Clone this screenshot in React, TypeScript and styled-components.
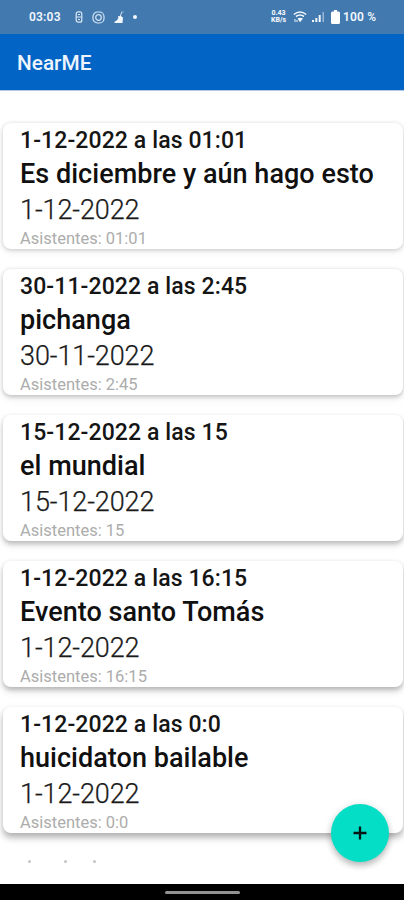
import React from 'react';
import styled, { createGlobalStyle } from 'styled-components';

const GlobalStyle = createGlobalStyle`
  * { box-sizing: border-box; }
  body { margin: 0; background: #fff; font-family: Roboto, 'Liberation Sans', sans-serif; }
`;

const Screen = styled.div`
  position: relative;
  width: 404px;
  height: 900px;
  display: flex;
  flex-direction: column;
  overflow: hidden;
  background: #fff;
`;

const StatusBar = styled.header`
  flex: 0 0 33.5px;
  display: flex;
  align-items: center;
  justify-content: space-between;
  padding: 1px 27px 0 29px;
  background: #4279af;
  color: #f1f7fd;
  font-size: 12px;
  font-weight: 600;
`;

const StatusGroup = styled.div<{ $gap: number }>`
  display: flex;
  align-items: center;
  gap: ${(p) => p.$gap}px;
  white-space: nowrap;
`;

const Clock = styled.span`
  width: 33px;
  margin-right: 4px;
  letter-spacing: 0.2px;
`;

const Speed = styled.span`
  display: flex;
  flex-direction: column;
  width: 15px;
  margin-right: 1px;
  font-size: 7px;
  line-height: 7px;
  font-weight: 800;
  text-align: center;
`;

const Percent = styled.span`
  width: 34px;
  margin-left: -2px;
  letter-spacing: 0.2px;
`;

const AppBar = styled.div`
  flex: 0 0 56.5px;
  display: flex;
  align-items: center;
  padding: 3px 17px 0;
  background: #0265c6;
  box-shadow: 0 1px 0 #b4c8e6;
`;

const AppTitle = styled.h1`
  margin: 0;
  color: #eef5fd;
  font-size: 20.8px;
  line-height: 24px;
  font-weight: 500;
`;

const EventList = styled.main`
  flex: 1;
  min-height: 0;
  overflow: hidden;
  display: flex;
  flex-direction: column;
  gap: 20.1px;
  padding: 33px 1px 0 3px;
`;

const Card = styled.article<{ $depth: number }>`
  flex: 0 0 126px;
  height: 126px;
  min-height: 0;
  padding: 5px 17px 0;
  border-radius: 8px;
  background: #fff;
  white-space: nowrap;
  box-shadow:
    0 ${(p) => 1 + p.$depth * 0.6}px ${(p) => 4 + p.$depth * 0.6}px rgba(0, 0, 0, ${(p) => 0.19 + p.$depth * 0.02}),
    0 ${(p) => 3 + p.$depth}px 10px rgba(0, 0, 0, 0.06);
`;

const Schedule = styled.div`
  font-size: 23px;
  line-height: 25px;
  font-weight: 500;
  letter-spacing: 0.1px;
  color: #151515;
`;

const EventName = styled.h2`
  margin: 4px 0 0;
  font-size: 27px;
  line-height: 34px;
  font-weight: 500;
  letter-spacing: 0.03px;
  color: #101010;
`;

const EventDate = styled.div`
  padding-top: 2px;
  font-size: 27px;
  line-height: 34px;
  font-weight: 300;
  letter-spacing: -0.1px;
  color: #1a1a1a;
  -webkit-text-stroke: 0.25px #1a1a1a;
`;

const Attendees = styled.div`
  padding-top: 1px;
  font-size: 16.5px;
  line-height: 21px;
  font-weight: 400;
  color: #acacac;
`;

const NextRow = styled.div`
  display: flex;
  flex: 0 0 3px;
  gap: 30px;
  margin-top: 6.5px;
  padding-left: 25px;
`;

const Dot = styled.i<{ $offset?: number }>`
  width: 3px;
  height: 3px;
  border-radius: 50%;
  background: #c5c5c5;
  margin-left: ${(p) => p.$offset ?? 0}px;
`;

const AddButton = styled.button`
  position: absolute;
  left: 331px;
  top: 804px;
  width: 58px;
  height: 58px;
  display: grid;
  place-items: center;
  padding: 0;
  border: 0;
  border-radius: 50%;
  background: #05dec6;
  box-shadow: 0 4px 6px rgba(0, 0, 0, 0.22), 0 1px 9px rgba(0, 0, 0, 0.1);
`;

const NavigationBar = styled.footer`
  flex: 0 0 16px;
  display: flex;
  justify-content: center;
  padding-top: 7px;
  background: #000;
`;

const HomeHandle = styled.i`
  width: 75px;
  height: 3px;
  border-radius: 2px;
  background: #929292;
`;

const events = [
  { date: '1-12-2022', time: '01:01', name: 'Es diciembre y aún hago esto' },
  { date: '30-11-2022', time: '2:45', name: 'pichanga' },
  { date: '15-12-2022', time: '15', name: 'el mundial' },
  { date: '1-12-2022', time: '16:15', name: 'Evento santo Tomás' },
  { date: '1-12-2022', time: '0:0', name: 'huicidaton bailable' },
];

const LinkIcon = () => (
  <svg width="8" height="12" viewBox="0 0 8 12" fill="none" stroke="#dce9f5" strokeWidth="1.2">
    <rect x="1.2" y="0.8" width="5.6" height="10.4" rx="2" />
    <path d="M1.2 6h5.600M3 3.500h2M3 8.500h2" />
  </svg>
);

const CameraIcon = () => (
  <svg width="13" height="13" viewBox="0 0 13 13" fill="none" stroke="#d6e5f3" strokeWidth="1.2">
    <rect x="1" y="1" width="11" height="11" rx="4.5" />
    <circle cx="6.5" cy="6.5" r="2.8" />
  </svg>
);

const BroomIcon = () => (
  <svg width="11" height="13" viewBox="0 0 11 13" fill="#f1f7fd">
    <path d="M10.500.8 8 1.500 6.800 5 9 6.500l-.5 5.500H.5v-1.300c2-.8 3-2 3.800-3.700L4 5l1.800.3L7.500.800z" />
  </svg>
);

const WifiIcon = () => (
  <svg width="14" height="12" viewBox="0 0 14 12" fill="none" stroke="#f1f7fd" strokeWidth="1.6">
    <path d="M.8 3.500Q7-1.500 13.200 3.500M3 5.500Q7 2.600 11 5.500" />
    <path d="m4.500 7.500 2.500 3.800 3-3.800Q7 5.800 4.500 7.500z" fill="#f1f7fd" stroke="none" />
    <path d="M2 8v3M4 9v2" strokeWidth="1" />
  </svg>
);

const SignalIcon = () => (
  <svg width="13" height="12" viewBox="0 0 13 12" fill="#f1f7fd">
    <path d="M0 9h2v2H0zM3.3 7h2v4h-2zM6.7 4h2v7h-2z" />
    <path d="M10.5 1H12v10h-1.5z" opacity=".5" />
  </svg>
);

const BatteryIcon = () => (
  <svg width="9" height="14" viewBox="0 0 9 14" fill="#fff">
    <path d="M3 0h3v1.5h1.5Q9 1.5 9 3v9.5Q9 14 7.5 14h-6Q0 14 0 12.5V3q0-1.500 1.500-1.500H3z" />
  </svg>
);

const PlusIcon = () => (
  <svg width="14" height="14" viewBox="0 0 14 14" fill="none" stroke="#071716" strokeWidth="2.300">
    <path d="M7 .5v13M.5 7h13" />
  </svg>
);

const StatusDot = styled.i`
  width: 4px;
  height: 4px;
  margin-left: -1px;
  border-radius: 50%;
  background: #f1f7fd;
`;

export default function App() {
  return (
    <>
      <GlobalStyle />
      <Screen>
        <StatusBar>
          <StatusGroup $gap={9}>
            <Clock>03:03</Clock>
            <LinkIcon />
            <CameraIcon />
            <BroomIcon />
            <StatusDot />
          </StatusGroup>
          <StatusGroup $gap={5.5}>
            <Speed>
              <span>0.43</span>
              <span>KB/s</span>
            </Speed>
            <WifiIcon />
            <SignalIcon />
            <BatteryIcon />
            <Percent>100 %</Percent>
          </StatusGroup>
        </StatusBar>
        <AppBar>
          <AppTitle>NearME</AppTitle>
        </AppBar>
        <EventList>
          {events.map((event, index) => (
            <Card key={event.name} $depth={index}>
              <Schedule>{event.date} a las {event.time}</Schedule>
              <EventName>{event.name}</EventName>
              <EventDate>{event.date}</EventDate>
              <Attendees>Asistentes: {event.time}</Attendees>
            </Card>
          ))}
          <NextRow>
            <Dot />
            <Dot $offset={3} />
            <Dot $offset={-4} />
          </NextRow>
        </EventList>
        <NavigationBar>
          <HomeHandle />
        </NavigationBar>
        <AddButton aria-label="+">
          <PlusIcon />
        </AddButton>
      </Screen>
    </>
  );
}
